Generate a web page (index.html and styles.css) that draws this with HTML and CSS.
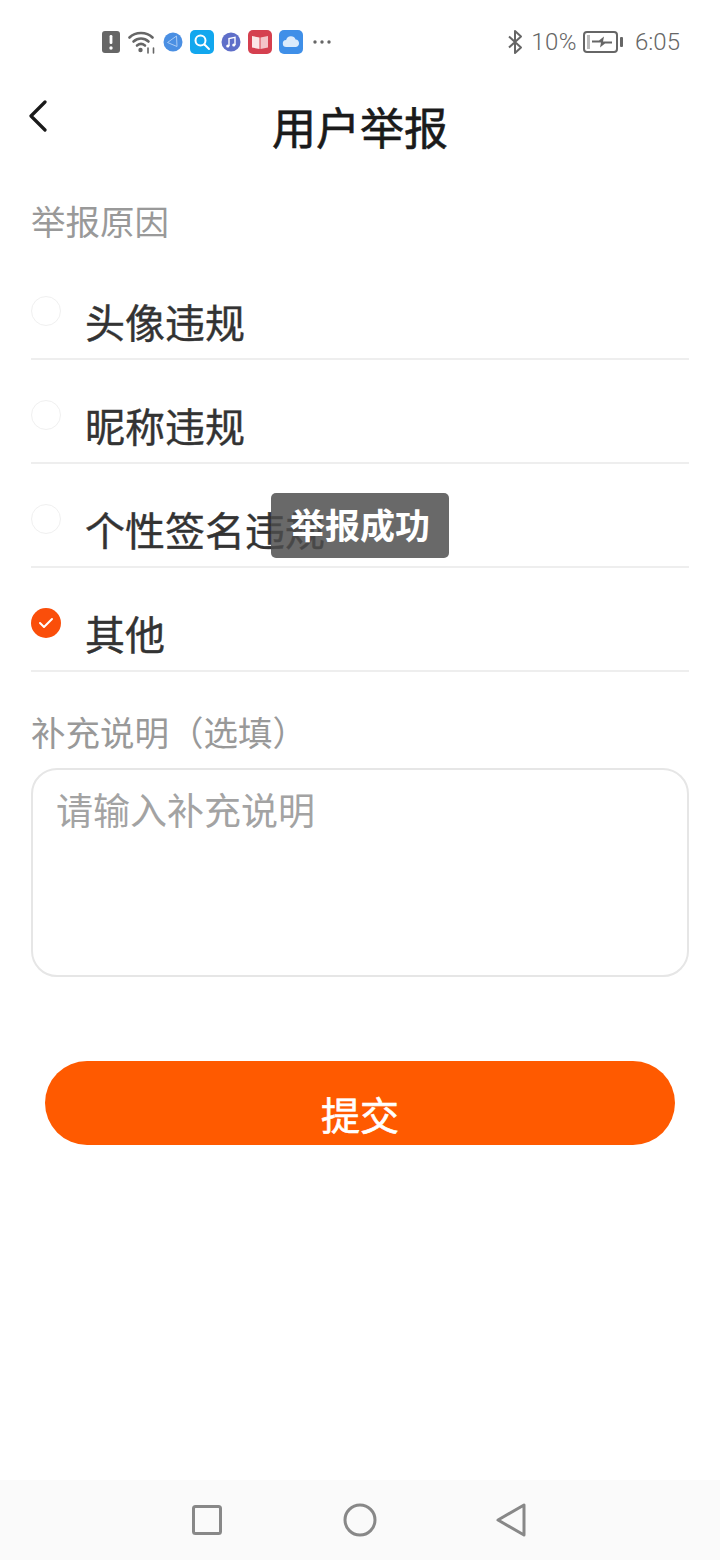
FILE: index.html
```html
<!DOCTYPE html>
<html lang="zh-CN">
<head>
  <meta charset="UTF-8">
  <meta name="viewport" content="width=device-width, initial-scale=1.0">
  <title>用户举报</title>
  <link rel="stylesheet" href="styles.css">
</head>
<body>
  <div class="page">
    <div class="status-bar">
      <div class="status-left">
        <svg class="ic" width="20" height="24" viewBox="0 0 20 24"><rect x="1" y="1" width="18" height="22" rx="3" fill="#666"/><rect x="8.600" y="5" width="2.800" height="9" rx="1.200" fill="#fff"/><circle cx="10" cy="18" r="1.700" fill="#fff"/></svg>
        <svg class="ic" width="28" height="24" viewBox="0 0 28 24" fill="none" stroke="#666" stroke-width="2.600" stroke-linecap="round"><path d="M1.500 7.500C7.500 1.500 18.500 1.500 24.500 7.500"/><path d="M5.500 11.500C10 7.500 16 7.500 20.500 11.500"/><path d="M9 15.500C11.500 13.500 14.500 13.500 17 15.500"/><circle cx="12.500" cy="20" r="2.200" fill="#666" stroke="none"/><path d="M20 18v5M25.500 18v5" stroke-width="1.600"/></svg>
        <svg class="ic" width="20" height="20" viewBox="0 0 20 20"><circle cx="10" cy="10" r="9.500" fill="#4a8fe3"/><path d="M13.500 4L4.500 10.500l9.500 4z" fill="none" stroke="#a9cbf5" stroke-width="1"/></svg>
        <svg class="ic" width="24" height="24" viewBox="0 0 24 24" fill="none"><rect width="24" height="24" rx="5" fill="#12a7ee"/><circle cx="10.500" cy="10.500" r="5" stroke="#fff" stroke-width="2"/><path d="M14.500 14.500L19 19" stroke="#fff" stroke-width="2" stroke-linecap="round"/></svg>
        <svg class="ic" width="20" height="20" viewBox="0 0 20 20"><circle cx="10" cy="10" r="9.500" fill="#5f6fc9"/><path d="M8 14V6.500l6-1.200V13" fill="none" stroke="#fff" stroke-width="1.400"/><circle cx="6.800" cy="14" r="1.600" fill="#fff"/><circle cx="12.800" cy="13" r="1.600" fill="#fff"/></svg>
        <svg class="ic" width="24" height="24" viewBox="0 0 24 24"><rect width="24" height="24" rx="5" fill="#d5404f"/><path d="M4 6l7.500 1.500V19L4 17.500z" fill="#fbe6e6"/><path d="M20 6l-7.500 1.500V19l7.500-1.500z" fill="#f4c4c8"/></svg>
        <svg class="ic" width="24" height="24" viewBox="0 0 24 24"><rect width="24" height="24" rx="5" fill="#3f8fe8"/><path d="M7.500 17a3.500 3.500 0 0 1-.4-7A5 5 0 0 1 16.600 9.500a3.800 3.800 0 0 1 .4 7.500z" fill="#dcebfb"/></svg>
        <svg class="ic dots" width="18" height="4" viewBox="0 0 18 4" fill="#666"><circle cx="2" cy="2" r="1.700"/><circle cx="9" cy="2" r="1.700"/><circle cx="16" cy="2" r="1.700"/></svg>
      </div>
      <div class="status-right">
        <svg class="bt" width="16" height="26" viewBox="0 0 16 26" fill="none" stroke="#666" stroke-width="2" stroke-linejoin="round"><path d="M2 7.500L14 18.500L8 24V2L14 7.500L2 18.500"/></svg>
        <span class="battery-pct">10%</span>
        <svg width="40" height="22" viewBox="0 0 40 22" fill="none"><rect x="1" y="1" width="33" height="20" rx="3" stroke="#666" stroke-width="2"/><rect x="4" y="4" width="3" height="14" fill="#bbb"/><path d="M9 9.500h7l5-4-1 5h9v2h-7l-5 4 1-5H9z" fill="#666"/><rect x="37" y="6" width="3" height="10" rx="1" fill="#666"/></svg>
        <span class="clock">6:05</span>
      </div>
    </div>

    <div class="title-bar">
      <svg class="back" width="20" height="32" viewBox="0 0 20 32" fill="none" stroke="#1a1a1a" stroke-width="3.200" stroke-linecap="round" stroke-linejoin="round"><path d="M17 2L3 16l14 14"/></svg>
      <h1>用户举报</h1>
    </div>

    <div class="content">
      <div class="section-label reason-label">举报原因</div>
      <div class="option"><span class="radio"></span><span class="option-text">头像违规</span></div>
      <div class="option"><span class="radio"></span><span class="option-text">昵称违规</span></div>
      <div class="option"><span class="radio"></span><span class="option-text">个性签名违规</span></div>
      <div class="option">
        <span class="radio radio-on">
          <svg width="16" height="12" viewBox="0 0 16 12" fill="none" stroke="#fff" stroke-width="2" stroke-linecap="round" stroke-linejoin="round"><path d="M2 6l4 4 8-8"/></svg>
        </span>
        <span class="option-text">其他</span>
      </div>

      <div class="section-label extra-label">补充说明（选填）</div>
      <div class="textarea">请输入补充说明</div>

      <div class="submit">提交</div>
    </div>

    <div class="toast">举报成功</div>

    <div class="nav-bar">
      <svg width="30" height="30" viewBox="0 0 30 30" fill="none" stroke="#888" stroke-width="3" stroke-linejoin="round"><rect x="1.500" y="1.500" width="27" height="27" rx="2"/></svg>
      <svg class="nav-home" width="34" height="34" viewBox="0 0 34 34" fill="none" stroke="#888" stroke-width="3"><circle cx="17" cy="17" r="15"/></svg>
      <svg class="nav-back" width="30" height="34" viewBox="0 0 30 34" fill="none" stroke="#888" stroke-width="3" stroke-linejoin="round"><path d="M28 2v30L2 17z"/></svg>
    </div>
  </div>
</body>
</html>
```

FILE: styles.css
```css
* {
  box-sizing: border-box;
}

body {
  margin: 0;
  font-family: "Noto Sans CJK SC", "Noto Sans", sans-serif;
  background-color: #fff;
}

.page {
  position: relative;
  display: flex;
  flex-direction: column;
  width: 720px;
  height: 1560px;
  overflow: hidden;
}

.status-bar {
  display: flex;
  justify-content: space-between;
  align-items: center;
  height: 84px;
  padding: 0 40px 0 101px;
}

.status-left {
  display: flex;
  align-items: center;
  gap: 7px;
}

.ic {
  display: block;
}

.dots {
  margin-left: 3px;
}

.status-right {
  display: flex;
  align-items: center;
  gap: 6px;
  font-family: "Roboto", sans-serif;
  font-size: 24px;
  font-weight: 300;
  color: #666;
}

.bt {
  margin-right: 2px;
}

.battery-pct {
  letter-spacing: 0.5px;
}

.clock {
  margin-left: 6px;
}

.title-bar {
  position: relative;
  height: 88px;
}

.title-bar h1 {
  margin: 0;
  font-size: 44px;
  font-weight: 400;
  line-height: 84px;
  text-align: center;
  color: #1a1a1a;
  -webkit-text-stroke: 0.6px #1a1a1a;
}

.back {
  position: absolute;
  left: 28px;
  top: 16px;
}

.content {
  flex: 1;
  padding: 0 31px;
}

.section-label {
  padding-top: 25px;
  font-size: 34.500px;
  line-height: 46px;
  color: #999;
}

.reason-label {
  margin-bottom: 13px;
}

.extra-label {
  padding-top: 36px;
}

.option {
  display: flex;
  align-items: flex-start;
  height: 104px;
  border-bottom: 2px solid #eee;
}

.radio {
  display: flex;
  justify-content: center;
  align-items: center;
  width: 30px;
  height: 30px;
  margin-top: 40px;
  border: 1px solid #f0f0f0;
  border-radius: 50%;
}

.radio-on {
  border: none;
  background-color: #fa4e0a;
}

.option-text {
  margin-left: 24px;
  font-size: 40px;
  line-height: 56px;
  padding-top: 37px;
  color: #333;
  -webkit-text-stroke: 0.4px #333;
}

.textarea {
  height: 209px;
  margin-top: 14px;
  padding: 14px 23px;
  border: 2px solid #e6e6e6;
  border-radius: 26px;
  font-size: 37px;
  line-height: 50px;
  color: #a3a3a3;
}

.submit {
  height: 84px;
  margin: 84px 14px 0;
  border-radius: 42px;
  background-color: #ff5a00;
  font-size: 39px;
  font-weight: 400;
  line-height: 104px;
  text-align: center;
  color: #fff;
  -webkit-text-stroke: 0.6px #fff;
  overflow: hidden;
}

.toast {
  position: absolute;
  left: 271px;
  top: 493px;
  width: 178px;
  height: 65px;
  border-radius: 5px;
  background-color: rgba(76, 76, 76, 0.84);
  font-size: 35px;
  font-weight: 700;
  line-height: 62px;
  text-align: center;
  color: #fff;
}

.nav-bar {
  display: flex;
  align-items: center;
  justify-content: center;
  gap: 122px;
  height: 80px;
  background-color: #fafafa;
}

.nav-home {
  margin-left: -1px;
}

.nav-back {
  margin-left: -3px;
  margin-right: 3px;
}
```
